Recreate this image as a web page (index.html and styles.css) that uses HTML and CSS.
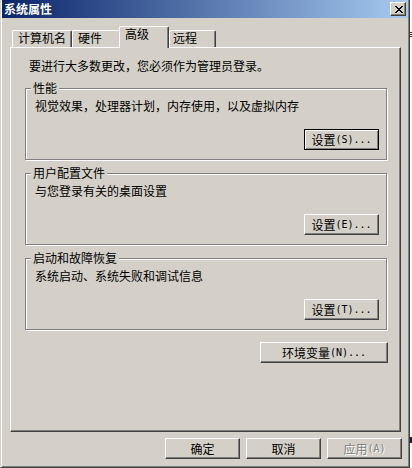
FILE: index.html
```html
<!DOCTYPE html>
<html lang="zh-CN">
<head>
<meta charset="utf-8">
<title>系统属性</title>
<link rel="stylesheet" href="styles.css">
</head>
<body>
<div class="window">
  <div class="titlebar">
    <span class="title">系统属性</span>
    <button class="close" aria-label="关闭">
      <svg width="8" height="7" viewBox="0 0 8 7"><path d="M0 0h2v1H0z M6 0h2v1H6z M1 1h2v1H1z M5 1h2v1H5z M2 2h4v1H2z M3 3h2v1H3z M2 4h4v1H2z M1 5h2v1H1z M5 5h2v1H5z M0 6h2v1H0z M6 6h2v1H6z" fill="#000"/></svg>
    </button>
  </div>
  <div class="tabs">
    <div class="tab t1">计算机名</div>
    <div class="tab t2">硬件</div>
    <div class="tab active">高级</div>
    <div class="tab t4">远程</div>
  </div>
  <div class="panel">
    <p class="intro">要进行大多数更改，您必须作为管理员登录。</p>
    <div class="group first">
      <div class="legend">性能</div>
      <p class="desc">视觉效果，处理器计划，内存使用，以及虚拟内存</p>
      <div class="actions"><button class="btn default">设置<span class="hk">(S)...</span></button></div>
    </div>
    <div class="group">
      <div class="legend">用户配置文件</div>
      <p class="desc">与您登录有关的桌面设置</p>
      <div class="actions"><button class="btn">设置<span class="hk">(E)...</span></button></div>
    </div>
    <div class="group">
      <div class="legend">启动和故障恢复</div>
      <p class="desc">系统启动、系统失败和调试信息</p>
      <div class="actions"><button class="btn">设置<span class="hk">(T)...</span></button></div>
    </div>
    <div class="envrow"><button class="btn env">环境变量<span class="hk">(N)...</span></button></div>
  </div>
  <div class="footer">
    <button class="btn">确定</button>
    <button class="btn">取消</button>
    <button class="btn disabled">应用<span class="hk">(A)</span></button>
  </div>
</div>
<div class="edge">
  <span class="mark m1"></span>
  <span class="mark m2"></span>
</div>
</body>
</html>
```
FILE: styles.css
```css
* { box-sizing: border-box; margin: 0; padding: 0; }

html, body { height: 100%; }

body {
  background: #fff;
  font: 12px/12px "Noto Sans CJK SC", sans-serif;
  color: #000;
  display: flex;
  overflow: hidden;
}

.window {
  width: 410px;
  height: 468px;
  flex: none;
  background: #d4d0c8;
  border-left: 1px solid #d4d0c8;
  border-right: 1px solid #404040;
  border-bottom: 1px solid #404040;
  box-shadow: inset 1px 0 #fff, inset -1px -1px #808080;
  padding: 0 1px;
  display: flex;
  flex-direction: column;
}

.titlebar {
  height: 18px;
  display: flex;
  align-items: center;
  justify-content: space-between;
  padding: 0 2px;
  background: linear-gradient(to right, #0a246a, #a6caf0);
}

.title {
  color: #fff;
  font-weight: bold;
}

.close {
  width: 16px;
  height: 14px;
  background: #d4d0c8;
  border: 1px solid;
  border-color: #fff #404040 #404040 #fff;
  box-shadow: inset -1px -1px #808080;
  display: flex;
  align-items: center;
  justify-content: center;
  padding-left: 1px;
}

.close svg { display: block; }

.tabs {
  margin-top: 8px;
  height: 21px;
  display: flex;
  align-items: flex-end;
  padding-left: 10px;
}

.tab {
  height: 17px;
  border-top: 1px solid #fff;
  border-left: 1px solid #fff;
  border-right: 1px solid #404040;
  border-radius: 2px 2px 0 0;
  box-shadow: inset -1px 0 #808080;
  padding: 1px 0 0 5px;
  background: #d4d0c8;
  white-space: nowrap;
}

.t1 { width: 60px; }
.t2 { width: 49px; }
.t4 { width: 47px; padding-left: 3px; }

.tab.active {
  width: 50px;
  height: 22px;
  margin-left: -2px;
  margin-bottom: -1px;
  position: relative;
  z-index: 1;
}

.panel {
  width: 391px;
  height: 385px;
  margin-left: 8px;
  border-top: 1px solid #fff;
  border-left: 1px solid #fff;
  border-right: 1px solid #404040;
  border-bottom: 1px solid #404040;
  box-shadow: inset -1px -1px #808080;
  display: flex;
  flex-direction: column;
}

.intro {
  margin: 12px 0 0 18px;
}

.group {
  height: 72px;
  margin: 13px 13px 0 14px;
  border: 1px solid #808080;
  box-shadow: inset 1px 1px #fff, 1px 1px #fff;
  display: flex;
  flex-direction: column;
}

.group.first { margin-top: 16px; }

.legend {
  align-self: flex-start;
  margin: -7px 0 0 5px;
  padding: 0 2px;
  background: #d4d0c8;
}

.desc {
  margin: 6px 0 0 9px;
}

.actions {
  margin-top: auto;
  display: flex;
  justify-content: flex-end;
  padding: 0 7px 9px 0;
}

.btn {
  width: 75px;
  height: 21px;
  background: #d4d0c8;
  border: 1px solid;
  border-color: #fff #404040 #404040 #fff;
  box-shadow: inset -1px -1px #808080;
  font: inherit;
  color: #000;
  display: flex;
  align-items: center;
  justify-content: center;
}

.btn.default {
  border-color: #000;
  box-shadow: inset 1px 1px #fff, inset -1px -1px #808080;
}

.btn.env { width: 128px; }

.btn.disabled {
  color: #808080;
  text-shadow: 1px 1px #fff;
}

.hk {
  font: 10px/12px "DejaVu Sans Mono", monospace;
  letter-spacing: 0;
}

.envrow {
  margin: 12px 12px 0 0;
  display: flex;
  justify-content: flex-end;
}

.footer {
  margin-top: 6px;
  padding-right: 6px;
  display: flex;
  justify-content: flex-end;
  gap: 6px;
}

.edge {
  flex: 1;
  display: flex;
  flex-direction: column;
  align-items: flex-start;
}

.mark { display: block; width: 2px; }
.m1 { margin-top: 32px; height: 5px; background: repeating-linear-gradient(#333 0 1px, #fff 1px 2px); }
.m2 { margin-top: 400px; height: 6px; background: #0a1a5a; }
```
